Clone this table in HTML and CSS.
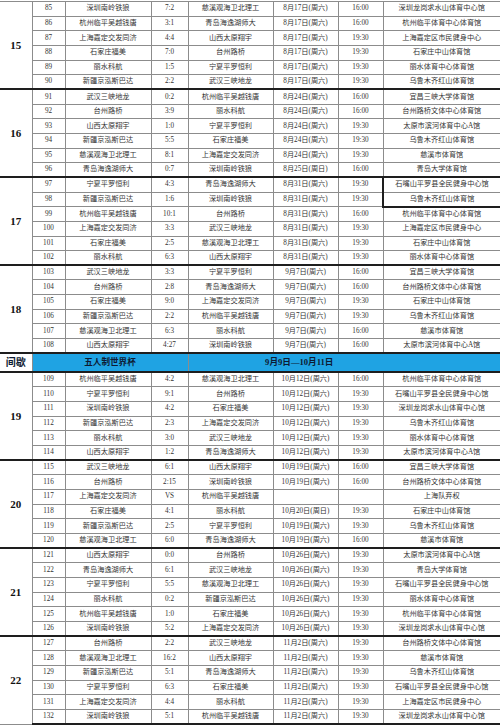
FILE: index.html
```html
<!DOCTYPE html>
<html lang="zh-CN">
<head>
<meta charset="utf-8">
<title>赛程表</title>
<link rel="stylesheet" href="styles.css">
</head>
<body>
<table class="sched">
<colgroup>
<col class="c-rd"><col class="c-no"><col class="c-tm"><col class="c-sc"><col class="c-tm2"><col class="c-dt"><col class="c-tt"><col class="c-vn">
</colgroup>
<tbody>
<tr class="first"><td class="rd" rowspan="6">15</td><td>85</td><td>深圳南岭铁狼</td><td>7:2</td><td>慈溪观海卫北理工</td><td>8月17日(周六)</td><td>16:00</td><td>深圳龙岗求水山体育中心馆</td></tr>
<tr><td>86</td><td>杭州临平吴越钱唐</td><td>3:1</td><td>青岛海逸湖师大</td><td>8月17日(周六)</td><td>16:00</td><td>杭州临平体育中心体育馆</td></tr>
<tr><td>87</td><td>上海嘉定交发同济</td><td>4:4</td><td>山西太原翔宇</td><td>8月17日(周六)</td><td>19:30</td><td>上海嘉定区市民健身中心</td></tr>
<tr><td>88</td><td>石家庄福美</td><td>7:0</td><td>台州路桥</td><td>8月17日(周六)</td><td>19:30</td><td>石家庄中山体育馆</td></tr>
<tr><td>89</td><td>丽水科航</td><td>1:5</td><td>宁夏平罗恒利</td><td>8月17日(周六)</td><td>19:30</td><td>丽水体育中心体育馆</td></tr>
<tr><td>90</td><td>新疆京泓斯巴达</td><td>2:2</td><td>武汉三峡地龙</td><td>8月17日(周六)</td><td>19:30</td><td>乌鲁木齐红山体育馆</td></tr>

<tr class="sep"><td class="rd" rowspan="6">16</td><td>91</td><td>武汉三峡地龙</td><td>0:2</td><td>杭州临平吴越钱唐</td><td>8月24日(周六)</td><td>16:00</td><td>宜昌三峡大学体育馆</td></tr>
<tr><td>92</td><td>台州路桥</td><td>3:9</td><td>丽水科航</td><td>8月24日(周六)</td><td>16:00</td><td>台州路桥文体中心体育馆</td></tr>
<tr><td>93</td><td>山西太原翔宇</td><td>1:0</td><td>宁夏平罗恒利</td><td>8月24日(周六)</td><td>19:30</td><td>太原市滨河体育中心A馆</td></tr>
<tr><td>94</td><td>新疆京泓斯巴达</td><td>5:5</td><td>石家庄福美</td><td>8月24日(周六)</td><td>19:30</td><td>乌鲁木齐红山体育馆</td></tr>
<tr><td>95</td><td>慈溪观海卫北理工</td><td>8:1</td><td>上海嘉定交发同济</td><td>8月24日(周六)</td><td>19:30</td><td>慈溪市体育馆</td></tr>
<tr><td>96</td><td>青岛海逸湖师大</td><td>0:7</td><td>深圳南岭铁狼</td><td>8月25日(周日)</td><td>16:00</td><td>青岛大学体育馆</td></tr>

<tr class="sep"><td class="rd" rowspan="6">17</td><td>97</td><td>宁夏平罗恒利</td><td>4:3</td><td>青岛海逸湖师大</td><td>8月31日(周六)</td><td>19:30</td><td class="hl">石嘴山平罗县全民健身中心馆</td></tr>
<tr><td>98</td><td>新疆京泓斯巴达</td><td>1:6</td><td>深圳南岭铁狼</td><td>8月31日(周六)</td><td>19:30</td><td class="hl hl-b">乌鲁木齐红山体育馆</td></tr>
<tr><td>99</td><td>杭州临平吴越钱唐</td><td>10:1</td><td>台州路桥</td><td>8月31日(周六)</td><td>16:00</td><td>杭州临平体育中心体育馆</td></tr>
<tr><td>100</td><td>上海嘉定交发同济</td><td>3:3</td><td>武汉三峡地龙</td><td>8月31日(周六)</td><td>19:30</td><td>上海嘉定区市民健身中心</td></tr>
<tr><td>101</td><td>石家庄福美</td><td>2:5</td><td>慈溪观海卫北理工</td><td>8月31日(周六)</td><td>19:30</td><td>石家庄中山体育馆</td></tr>
<tr><td>102</td><td>丽水科航</td><td>6:3</td><td>山西太原翔宇</td><td>8月31日(周六)</td><td>19:30</td><td>丽水体育中心体育馆</td></tr>

<tr class="sep"><td class="rd" rowspan="6">18</td><td>103</td><td>武汉三峡地龙</td><td>3:3</td><td>宁夏平罗恒利</td><td>9月7日(周六)</td><td>16:00</td><td>宜昌三峡大学体育馆</td></tr>
<tr><td>104</td><td>台州路桥</td><td>2:8</td><td>青岛海逸湖师大</td><td>9月7日(周六)</td><td>16:00</td><td>台州路桥文体中心体育馆</td></tr>
<tr><td>105</td><td>石家庄福美</td><td>9:0</td><td>上海嘉定交发同济</td><td>9月7日(周六)</td><td>19:30</td><td>石家庄中山体育馆</td></tr>
<tr><td>106</td><td>新疆京泓斯巴达</td><td>2:2</td><td>杭州临平吴越钱唐</td><td>9月7日(周六)</td><td>19:30</td><td>乌鲁木齐红山体育馆</td></tr>
<tr><td>107</td><td>慈溪观海卫北理工</td><td>6:3</td><td>丽水科航</td><td>9月7日(周六)</td><td>16:00</td><td>慈溪市体育馆</td></tr>
<tr><td>108</td><td>山西太原翔宇</td><td>4:27</td><td>深圳南岭铁狼</td><td>9月7日(周六)</td><td>16:00</td><td>太原市滨河体育中心A馆</td></tr>

<tr class="sep break"><td class="rd-break">间歇</td><td class="b-ev" colspan="3">五人制世界杯</td><td class="b-dt" colspan="4">9月9日—10月11日</td></tr>

<tr class="sep"><td class="rd" rowspan="6">19</td><td>109</td><td>杭州临平吴越钱唐</td><td>4:2</td><td>慈溪观海卫北理工</td><td>10月12日(周六)</td><td>16:00</td><td>杭州临平体育中心体育馆</td></tr>
<tr><td>110</td><td>宁夏平罗恒利</td><td>9:1</td><td>台州路桥</td><td>10月12日(周六)</td><td>19:30</td><td>石嘴山平罗县全民健身中心馆</td></tr>
<tr><td>111</td><td>深圳南岭铁狼</td><td>4:2</td><td>石家庄福美</td><td>10月12日(周六)</td><td>19:30</td><td>深圳龙岗求水山体育中心馆</td></tr>
<tr><td>112</td><td>新疆京泓斯巴达</td><td>2:3</td><td>上海嘉定交发同济</td><td>10月12日(周六)</td><td>19:30</td><td>乌鲁木齐红山体育馆</td></tr>
<tr><td>113</td><td>丽水科航</td><td>3:0</td><td>武汉三峡地龙</td><td>10月12日(周六)</td><td>19:30</td><td>丽水体育中心体育馆</td></tr>
<tr><td>114</td><td>山西太原翔宇</td><td>1:2</td><td>青岛海逸湖师大</td><td>10月12日(周六)</td><td>19:30</td><td>太原市滨河体育中心A馆</td></tr>

<tr class="sep"><td class="rd" rowspan="6">20</td><td>115</td><td>武汉三峡地龙</td><td>6:1</td><td>山西太原翔宇</td><td>10月19日(周六)</td><td>16:00</td><td>宜昌三峡大学体育馆</td></tr>
<tr><td>116</td><td>台州路桥</td><td>2:15</td><td>深圳南岭铁狼</td><td>10月19日(周六)</td><td>16:00</td><td>台州路桥文体中心体育馆</td></tr>
<tr><td>117</td><td>上海嘉定交发同济</td><td>VS</td><td>杭州临平吴越钱唐</td><td></td><td></td><td>上海队弃权</td></tr>
<tr><td>118</td><td>石家庄福美</td><td>4:1</td><td>丽水科航</td><td>10月20日(周日)</td><td>19:30</td><td>石家庄中山体育馆</td></tr>
<tr><td>119</td><td>新疆京泓斯巴达</td><td>2:5</td><td>宁夏平罗恒利</td><td>10月19日(周六)</td><td>19:30</td><td>乌鲁木齐红山体育馆</td></tr>
<tr><td>120</td><td>慈溪观海卫北理工</td><td>6:0</td><td>青岛海逸湖师大</td><td>10月19日(周六)</td><td>16:00</td><td>慈溪市体育馆</td></tr>

<tr class="sep"><td class="rd" rowspan="6">21</td><td>121</td><td>山西太原翔宇</td><td>0:0</td><td>台州路桥</td><td>10月26日(周六)</td><td>19:30</td><td>太原市滨河体育中心A馆</td></tr>
<tr><td>122</td><td>青岛海逸湖师大</td><td>6:1</td><td>武汉三峡地龙</td><td>10月26日(周六)</td><td>19:30</td><td>青岛大学体育馆</td></tr>
<tr><td>123</td><td>宁夏平罗恒利</td><td>5:5</td><td>慈溪观海卫北理工</td><td>10月26日(周六)</td><td>19:30</td><td>石嘴山平罗县全民健身中心馆</td></tr>
<tr><td>124</td><td>丽水科航</td><td>0:2</td><td>新疆京泓斯巴达</td><td>10月26日(周六)</td><td>19:30</td><td>丽水体育中心体育馆</td></tr>
<tr><td>125</td><td>杭州临平吴越钱唐</td><td>1:0</td><td>石家庄福美</td><td>10月26日(周六)</td><td>19:30</td><td>杭州临平体育中心体育馆</td></tr>
<tr><td>126</td><td>深圳南岭铁狼</td><td>5:2</td><td>上海嘉定交发同济</td><td>10月26日(周六)</td><td>19:30</td><td>深圳龙岗求水山体育中心馆</td></tr>

<tr class="sep"><td class="rd" rowspan="6">22</td><td>127</td><td>台州路桥</td><td>2:2</td><td>武汉三峡地龙</td><td>11月2日(周六)</td><td>19:30</td><td>台州路桥文体中心体育馆</td></tr>
<tr><td>128</td><td>慈溪观海卫北理工</td><td>16:2</td><td>山西太原翔宇</td><td>11月2日(周六)</td><td>19:30</td><td>慈溪市体育馆</td></tr>
<tr><td>129</td><td>新疆京泓斯巴达</td><td>5:1</td><td>青岛海逸湖师大</td><td>11月2日(周六)</td><td>19:30</td><td>乌鲁木齐红山体育馆</td></tr>
<tr><td>130</td><td>宁夏平罗恒利</td><td>6:3</td><td>石家庄福美</td><td>11月2日(周六)</td><td>19:30</td><td>石嘴山平罗县全民健身中心馆</td></tr>
<tr><td>131</td><td>上海嘉定交发同济</td><td>4:4</td><td>丽水科航</td><td>11月2日(周六)</td><td>19:30</td><td>上海嘉定区市民健身中心</td></tr>
<tr class="last"><td>132</td><td>深圳南岭铁狼</td><td>5:1</td><td>杭州临平吴越钱唐</td><td>11月2日(周六)</td><td>19:30</td><td>深圳龙岗求水山体育中心馆</td></tr>
</tbody>
</table>
</body>
</html>
```

FILE: styles.css
```css
html, body {
  margin: 0;
  padding: 0;
  background: #ffffff;
}

body {
  padding-top: 1px;
}

.sched {
  width: 500px;
  table-layout: fixed;
  border-collapse: collapse;
  font-family: "Liberation Serif", "Noto Sans CJK SC", serif;
  font-size: 7.2px;
  color: #333333;
}

.c-rd { width: 32px; }
.c-no { width: 33px; }
.c-tm { width: 86px; }
.c-sc { width: 37px; }
.c-tm2 { width: 85px; }
.c-dt { width: 65px; }
.c-tt { width: 45px; }
.c-vn { width: 117px; }

.sched tr {
  height: 14.66px;
}

.sched td {
  border: 1px solid #8c8c8c;
  padding: 0;
  text-align: center;
  vertical-align: middle;
  line-height: 9px;
  white-space: nowrap;
  overflow: hidden;
}

.sched tr td:last-child {
  border-right: none;
}

.sched tr.first td {
  border-top: 1px solid #8c8c8c;
}

.sched td.rd {
  border-left: none;
  font-size: 11px;
  font-weight: bold;
  color: #111111;
}

.sched tr.sep td {
  border-top: 2px solid #1e1e1e;
}

.sched tr.last td {
  border-bottom: 2px solid #1e1e1e;
}

.sched td.hl {
  border-left: 2px solid #1e1e1e;
}

.sched td.hl-b {
  border-bottom: 2px solid #1e1e1e;
}

.sched tr.break {
  height: 19px;
}

.sched tr.break td {
  border-bottom: 2px solid #1e1e1e;
  font-weight: bold;
  color: #0d1a33;
}

.sched td.rd-break {
  border-left: none;
  background: #ffffff;
  font-size: 10px;
  color: #111111;
}

.sched td.b-ev,
.sched td.b-dt {
  background: #1fa3e3;
  font-size: 8.6px;
}

.sched td.b-dt {
  padding-right: 90px;
}
```
